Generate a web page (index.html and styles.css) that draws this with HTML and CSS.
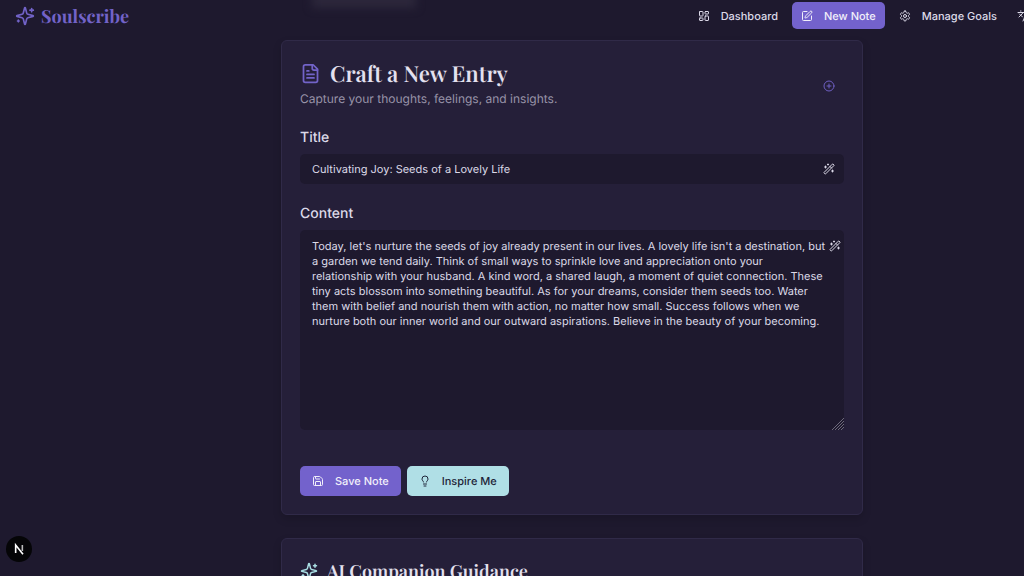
FILE: index.html
```html
<!DOCTYPE html>
<html lang="en">
<head>
  <meta charset="UTF-8">
  <meta name="viewport" content="width=device-width, initial-scale=1.0">
  <title>Soulscribe</title>
  <link rel="stylesheet" href="styles.css">
</head>
<body>
  <header class="header">
    <div class="header-glow"></div>
    <a href="#" class="logo">
      <svg class="icon logo-icon" viewBox="0 0 24 24"><path d="M9.937 15.5A2 2 0 0 0 8.5 14.063l-6.135-1.582a.5.5 0 0 1 0-.962L8.5 9.936A2 2 0 0 0 9.937 8.5l1.582-6.135a.5.5 0 0 1 .963 0L14.063 8.5A2 2 0 0 0 15.5 9.937l6.135 1.581a.5.5 0 0 1 0 .964L15.5 14.063a2 2 0 0 0-1.437 1.437l-1.582 6.135a.5.5 0 0 1-.963 0z"/><path d="M20 3v4M22 5h-4M4 17v2M5 18H3"/></svg>
      <span>Soulscribe</span>
    </a>
    <nav class="nav">
      <a href="#" class="nav-link">
        <svg class="icon" viewBox="0 0 24 24"><rect x="3" y="3" width="7" height="9" rx="1"/><rect x="14" y="3" width="7" height="5" rx="1"/><rect x="14" y="12" width="7" height="9" rx="1"/><rect x="3" y="16" width="7" height="5" rx="1"/></svg>
        <span>Dashboard</span>
      </a>
      <a href="#" class="nav-link active">
        <svg class="icon" viewBox="0 0 24 24"><path d="M12 3H5a2 2 0 0 0-2 2v14a2 2 0 0 0 2 2h14a2 2 0 0 0 2-2v-7"/><path d="M18.375 2.625a1 1 0 0 1 3 3l-9.013 9.014a2 2 0 0 1-.853.505l-2.873.84a.5.5 0 0 1-.62-.62l.84-2.873a2 2 0 0 1 .506-.852z"/></svg>
        <span>New Note</span>
      </a>
      <a href="#" class="nav-link">
        <svg class="icon" viewBox="0 0 24 24"><path d="M12.22 2h-.44a2 2 0 0 0-2 2v.18a2 2 0 0 1-1 1.73l-.43.25a2 2 0 0 1-2 0l-.15-.08a2 2 0 0 0-2.73.73l-.22.38a2 2 0 0 0 .73 2.73l.15.1a2 2 0 0 1 1 1.72v.51a2 2 0 0 1-1 1.74l-.15.09a2 2 0 0 0-.73 2.73l.22.38a2 2 0 0 0 2.73.73l.15-.08a2 2 0 0 1 2 0l.43.25a2 2 0 0 1 1 1.73V20a2 2 0 0 0 2 2h.44a2 2 0 0 0 2-2v-.18a2 2 0 0 1 1-1.73l.43-.25a2 2 0 0 1 2 0l.15.08a2 2 0 0 0 2.73-.73l.22-.39a2 2 0 0 0-.73-2.73l-.15-.08a2 2 0 0 1-1-1.74v-.5a2 2 0 0 1 1-1.74l.15-.09a2 2 0 0 0 .73-2.73l-.22-.38a2 2 0 0 0-2.73-.73l-.15.08a2 2 0 0 1-2 0l-.43-.25a2 2 0 0 1-1-1.73V4a2 2 0 0 0-2-2z"/><circle cx="12" cy="12" r="3"/></svg>
        <span>Manage Goals</span>
      </a>
      <button type="button" class="lang-button" aria-label="Language">
        <svg class="icon" viewBox="0 0 24 24"><path d="m5 8 6 6M4 14l6-6 2-3M2 5h12M7 2h1M22 22l-5-10-5 10M14 18h6"/></svg>
      </button>
    </nav>
  </header>

  <main class="main">
    <section class="card">
      <div class="card-header">
        <div>
          <h1 class="card-title">
            <svg class="icon title-icon" viewBox="0 0 24 24"><path d="M15 2H6a2 2 0 0 0-2 2v16a2 2 0 0 0 2 2h12a2 2 0 0 0 2-2V7Z"/><path d="M14 2v4a2 2 0 0 0 2 2h4M10 9H8M16 13H8M16 17H8"/></svg>
            <span>Craft a New Entry</span>
          </h1>
          <p class="card-text">Capture your thoughts, feelings, and insights.</p>
        </div>
        <button type="button" class="icon-button add-button" aria-label="Add entry">
          <svg class="icon" viewBox="0 0 24 24"><circle cx="12" cy="12" r="10"/><path d="M8 12h8M12 8v8"/></svg>
        </button>
      </div>

      <form class="form">
        <label class="label" for="title">Title</label>
        <div class="field">
          <input class="input" id="title" type="text" value="Cultivating Joy: Seeds of a Lovely Life">
          <button type="button" class="icon-button wand-title" aria-label="Suggest title">
            <svg class="icon" viewBox="0 0 24 24"><path d="m21.64 3.64-1.28-1.28a1.21 1.21 0 0 0-1.72 0L2.36 18.64a1.21 1.21 0 0 0 0 1.72l1.28 1.28a1.2 1.2 0 0 0 1.72 0L21.64 5.36a1.2 1.2 0 0 0 0-1.72M14 7l3 3M5 6v4M19 14v4M10 2v2M7 8H3M21 16h-4M11 3H9"/></svg>
          </button>
        </div>

        <label class="label" for="content">Content</label>
        <div class="field">
          <textarea class="input textarea" id="content" spellcheck="false">Today, let's nurture the seeds of joy already present in our lives. A lovely life isn't a destination, but a garden we tend daily. Think of small ways to sprinkle love and appreciation onto your relationship with your husband. A kind word, a shared laugh, a moment of quiet connection. These tiny acts blossom into something beautiful. As for your dreams, consider them seeds too. Water them with belief and nourish them with action, no matter how small. Success follows when we nurture both our inner world and our outward aspirations. Believe in the beauty of your becoming.</textarea>
          <button type="button" class="icon-button wand-content" aria-label="Improve content">
            <svg class="icon" viewBox="0 0 24 24"><path d="m21.64 3.64-1.28-1.28a1.21 1.21 0 0 0-1.72 0L2.36 18.64a1.21 1.21 0 0 0 0 1.72l1.28 1.28a1.2 1.2 0 0 0 1.72 0L21.64 5.36a1.2 1.2 0 0 0 0-1.72M14 7l3 3M5 6v4M19 14v4M10 2v2M7 8H3M21 16h-4M11 3H9"/></svg>
          </button>
          <svg class="grip" viewBox="0 0 12 12"><path d="M0 12 12 0M3 12l9-9M6 12l6-6M9 12l3-3"/></svg>
        </div>

        <div class="actions">
          <button type="submit" class="button primary">
            <svg class="icon" viewBox="0 0 24 24"><path d="M15.2 3a2 2 0 0 1 1.4.6l3.8 3.8a2 2 0 0 1 .6 1.4V19a2 2 0 0 1-2 2H5a2 2 0 0 1-2-2V5a2 2 0 0 1 2-2z"/><path d="M17 21v-7a1 1 0 0 0-1-1H8a1 1 0 0 0-1 1v7M7 3v4a1 1 0 0 0 1 1h7"/></svg>
            <span>Save Note</span>
          </button>
          <button type="button" class="button accent">
            <svg class="icon" viewBox="0 0 24 24"><path d="M15 14c.2-1 .7-1.7 1.5-2.5 1-.9 1.5-2.2 1.5-3.5A6 6 0 0 0 6 8c0 1 .2 2.2 1.5 3.5.7.7 1.3 1.5 1.5 2.5M9 18h6M10 22h4"/></svg>
            <span>Inspire Me</span>
          </button>
        </div>
      </form>
    </section>

    <section class="card">
      <h2 class="card-title small">
        <svg class="icon guide-icon" viewBox="0 0 24 24"><path d="M9.937 15.5A2 2 0 0 0 8.5 14.063l-6.135-1.582a.5.5 0 0 1 0-.962L8.5 9.936A2 2 0 0 0 9.937 8.5l1.582-6.135a.5.5 0 0 1 .963 0L14.063 8.5A2 2 0 0 0 15.5 9.937l6.135 1.581a.5.5 0 0 1 0 .964L15.5 14.063a2 2 0 0 0-1.437 1.437l-1.582 6.135a.5.5 0 0 1-.963 0z"/><path d="M20 3v4M22 5h-4M4 17v2M5 18H3"/></svg>
        <span>AI Companion Guidance</span>
      </h2>
    </section>
  </main>

  <button type="button" class="dev-badge" aria-label="Developer tools">
    <svg viewBox="0 0 24 24"><path d="M7 18V6l11 14" stroke="#fff" stroke-width="2.4"/><path d="M17 6v9" stroke="#bbb" stroke-width="2.4"/></svg>
  </button>
</body>
</html>
```

FILE: styles.css
```css
* {
  box-sizing: border-box;
}

html, body {
  height: 100%;
  margin: 0;
  overflow: hidden;
}

body {
  background-color: #1e192e;
  color: #dcd9e8;
  font-family: Inter, "Noto Sans", sans-serif;
  font-size: 11px;
  text-rendering: geometricPrecision;
}

h1, h2, p {
  margin: 0;
}

a {
  color: inherit;
  text-decoration: none;
}

button {
  font-family: inherit;
  color: inherit;
  border: none;
  padding: 0;
  cursor: pointer;
  text-rendering: inherit;
}

.icon {
  display: block;
  width: 12px;
  height: 12px;
  flex-shrink: 0;
  fill: none;
  stroke: currentColor;
  stroke-width: 2;
  stroke-linecap: round;
  stroke-linejoin: round;
}

/* header */
.header {
  position: relative;
  display: flex;
  align-items: center;
  justify-content: space-between;
  height: 31px;
  padding-left: 15px;
}

.header-glow {
  position: absolute;
  top: -8px;
  left: 312px;
  width: 104px;
  height: 16px;
  background-color: #2c273b;
  filter: blur(4px);
}

.logo {
  display: flex;
  align-items: center;
  gap: 6px;
  color: #7263c8;
  font-family: "Playfair Display", "Liberation Serif", serif;
  font-size: 18px;
  font-weight: bold;
}

.logo-icon {
  width: 20px;
  height: 20px;
}

.nav {
  display: flex;
  align-items: center;
  gap: 5px;
}

.nav-link {
  display: flex;
  align-items: center;
  gap: 11px;
  height: 27px;
  padding: 0 9px;
  border-radius: 5px;
  font-weight: 500;
}

.nav-link.active {
  background-color: #7362cc;
  color: #f1effa;
}

.lang-button {
  width: 13px;
  padding-left: 6px;
  background: none;
}

/* cards */
.main {
  display: flex;
  flex-direction: column;
  gap: 23px;
  padding: 9px 161px 0 281px;
}

.card {
  padding: 19px 18px 18px;
  background-color: #251f39;
  border: 1px solid #302a48;
  border-radius: 6px;
  box-shadow: 0 4px 8px rgba(0, 0, 0, 0.15);
}

.card-header {
  display: flex;
  align-items: center;
  justify-content: space-between;
}

.card-title {
  display: flex;
  align-items: center;
  gap: 9px;
  color: #e4e1ef;
  font-family: "Playfair Display", "Liberation Serif", serif;
  font-size: 22px;
  line-height: 26px;
  font-weight: 600;
}

.card-title.small {
  font-size: 18px;
}

.title-icon {
  width: 21px;
  height: 21px;
  color: #7263c8;
}

.guide-icon {
  width: 18px;
  height: 18px;
  color: #a9dde3;
}

.card-text {
  margin-top: 4px;
  color: #9893a8;
  font-size: 12px;
  line-height: 18px;
}

.icon-button {
  background: none;
}

.add-button {
  margin: 4px 9px 0 0;
  color: #6f60c4;
}

/* form */
.label {
  display: block;
  margin: 20px 0 6px;
  font-size: 14px;
  line-height: 20px;
  font-weight: 500;
}

.field {
  position: relative;
}

.input {
  display: block;
  width: 100%;
  height: 30px;
  padding: 0 36px 0 12px;
  background-color: #1e192e;
  border: none;
  border-radius: 5px;
  color: inherit;
  font-family: inherit;
  font-size: 11px;
  text-rendering: inherit;
  outline: none;
}

.textarea {
  height: 200px;
  padding: 9px 18px 9px 12px;
  line-height: 15px;
  resize: vertical;
}

.textarea::-webkit-resizer {
  display: none;
}

.grip {
  position: absolute;
  right: 0;
  bottom: 0;
  width: 12px;
  height: 12px;
  fill: none;
  stroke: #6d697b;
  pointer-events: none;
}

.wand-title {
  position: absolute;
  top: 9px;
  right: 9px;
}

.wand-content {
  position: absolute;
  top: 10px;
  right: 3px;
}

.actions {
  display: flex;
  gap: 6px;
  margin-top: 36px;
}

.button {
  display: flex;
  align-items: center;
  gap: 11px;
  height: 30px;
  padding: 0 12px;
  border-radius: 5px;
  font-size: 11px;
  font-weight: 500;
}

.primary {
  background-color: #7362cc;
  color: #f1effa;
}

.accent {
  background-color: #b0dfe6;
  color: #1e2438;
}

.dev-badge {
  position: fixed;
  left: 6px;
  bottom: 14px;
  width: 26px;
  height: 26px;
  background-color: #050507;
  border-radius: 50%;
}

.dev-badge svg {
  display: block;
  width: 16px;
  height: 16px;
  margin: 0 auto;
  fill: none;
}
```
